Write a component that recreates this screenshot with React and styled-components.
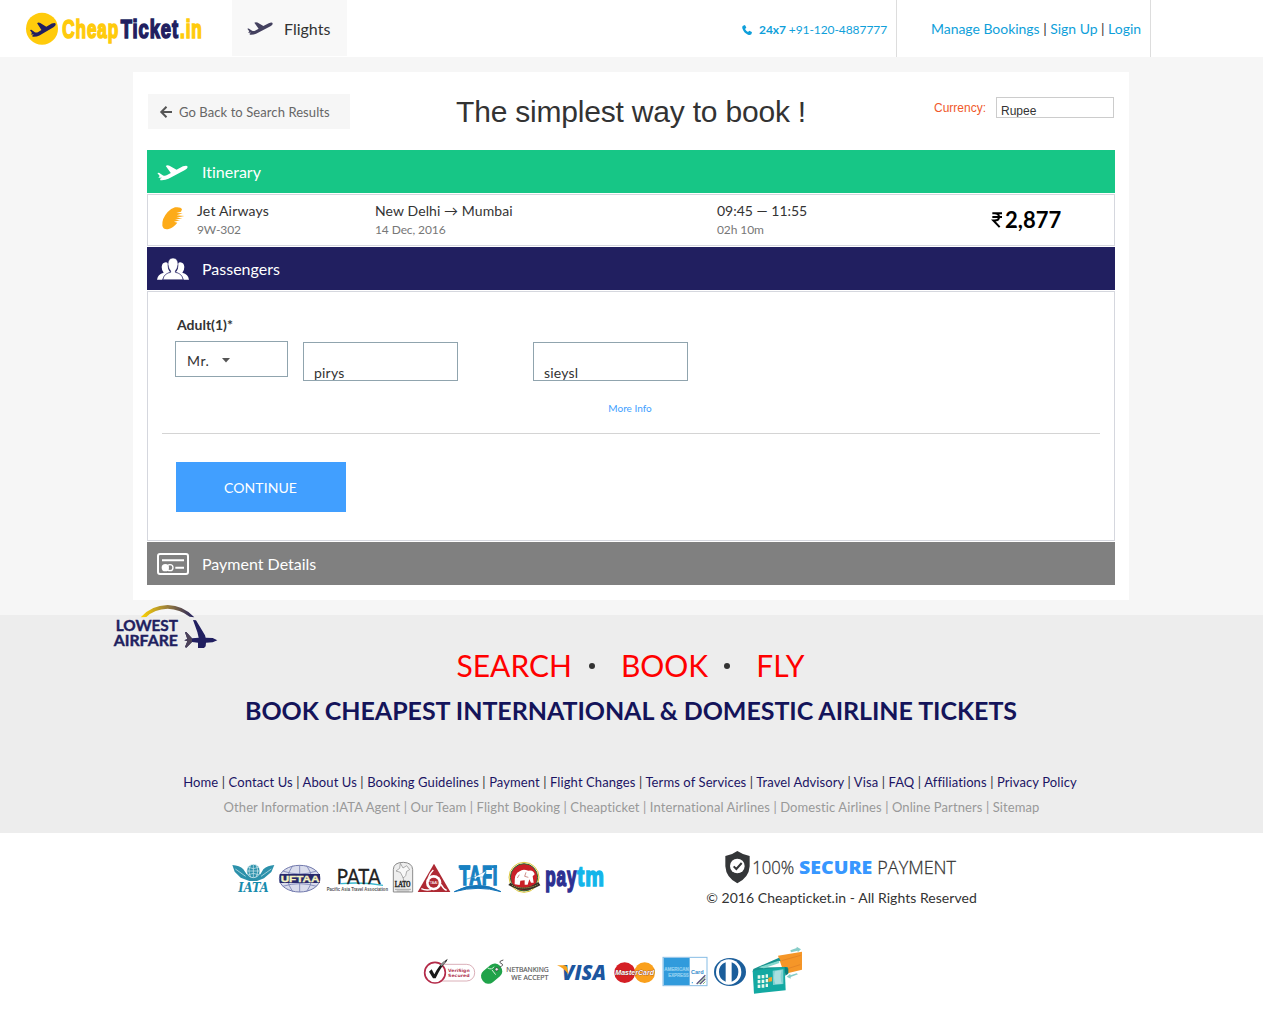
import React from "react";
import styled, { createGlobalStyle } from "styled-components";

const Global = createGlobalStyle`
  * { box-sizing: border-box; }
  body { margin: 0; background: #fff; color: #333; font-family: Lato, "Liberation Sans", sans-serif; font-size: 14px; font-variant-ligatures: none; }
  a { color: inherit; text-decoration: none; }
  svg { display: block; flex: none; overflow: visible; }
`;

const Page = styled.div`width: 1263px; height: 1019px; overflow: hidden;`;

const Header = styled.header`
  display: flex; height: 57px; background: #fff; padding-left: 25px;
`;
const Brand = styled.a`width: 207px; padding-top: 11px;`;
const Tab = styled.a`
  display: flex; align-items: center; gap: 11px; width: 115px; height: 56px;
  padding-left: 15px; background: #f8f8f8; font-size: 16px; color: #333;
`;
const Phone = styled.div`
  display: flex; align-items: center; width: 155px; height: 57px; margin-left: auto; padding-top: 2px;
  border-right: 1px solid #ddd; color: #0f9fda; font-size: 12px; white-space: pre; letter-spacing: -0.08px;
  svg { margin-right: 7px; }
`;
const Account = styled.nav`
  display: flex; align-items: center; justify-content: flex-end; width: 254px; height: 57px;
  margin-right: 112px; padding: 0 9px 1px 0; border-right: 1px solid #ddd; white-space: pre; letter-spacing: -0.03px;
  a { color: #0f9fda; }
`;

const Main = styled.main`height: 558px; padding: 15px 0 0 133px; background: #f6f6f6;`;
const Card = styled.section`width: 996px; height: 528px; padding: 0 14px; background: #fff;`;
const CardTop = styled.div`
  display: grid; grid-template-columns: 1fr auto 1fr; height: 78px; padding: 22px 1px 0;
`;
const Back = styled.a`
  display: flex; align-items: center; gap: 7px; width: 202px; height: 35px; padding: 0 0 0 12px;
  background: #f6f6f6; color: #666; font-size: 13px; letter-spacing: 0.08px;
  svg { margin-top: 1px; }
`;
const Title = styled.h1`
  margin: 0; font: 400 30px/36px "Liberation Sans", Arial, sans-serif; color: #333; white-space: nowrap;
  letter-spacing: -0.2px;
`;
const Currency = styled.label`
  display: flex; justify-content: flex-end; gap: 10px; padding-top: 3px;
  font: 12px/21px "Liberation Sans", Arial, sans-serif; color: #f0592b;
  > span:first-child { padding-top: 1px; }
`;
const CurrencyBox = styled.span`
  width: 118px; height: 21px; padding: 4px 4px 0; overflow: hidden; border: 1px solid #ccc;
  color: #333; line-height: 19px;
`;

const Bar = styled.h2`
  display: flex; align-items: center; height: 43px; margin: 0; padding-left: 10px;
  background: ${(p) => p.$bg}; color: #fff; font-size: 16px; font-weight: 400;
  span { width: 45px; padding-top: ${(p) => p.$drop || 0}px; }
`;
const FlightRow = styled.div`
  display: grid; grid-template-columns: 49px 178px 342px 275px 1fr; height: 52px; margin: 1px 0;
  border: 1px solid #d5d7de; background: #fff;
`;
const Carrier = styled.div`padding: 12px 0 0 14px;`;
const Cell = styled.div`
  padding-top: 6px; line-height: 19px; white-space: nowrap; letter-spacing: ${(p) => p.$ls || 0}px;
  small { display: block; font-size: 12px; color: #777; letter-spacing: -0.1px; }
`;
const Fare = styled.div`
  display: flex; align-items: center; gap: 3px; padding-bottom: 1px; color: #000; font-size: 22px; font-weight: 700;
`;

const Panel = styled.div`
  height: 250px; margin: 1px 0; padding: 22px 14px 0; border: 1px solid #d5d7de;
`;
const Legend = styled.div`padding-left: 15px; font-weight: 700; line-height: 21px; height: 27px;`;
const Fields = styled.div`display: flex; align-items: flex-start; height: 58px; padding-left: 13px;`;
const TitleSelect = styled.div`
  display: flex; align-items: center; gap: 13px; width: 113px; height: 36px; padding: 3px 0 0 11px;
  border: 1px solid #90a4ae; letter-spacing: 0.5px;
`;
const Input = styled.div`
  width: 155px; height: 39px; margin: 1px 0 0 ${(p) => p.$gap}px; padding: 20px 10px 0; overflow: hidden;
  border: 1px solid #90a4ae; line-height: 19px; letter-spacing: 0.2px;
`;
const More = styled.a`
  display: block; height: 34px; padding: 1px 2px 0 0; text-align: center; font-size: 10px; line-height: 17px; color: #419fff;
`;
const Submit = styled.button`
  display: block; width: 170px; height: 50px; margin: 28px 0 0 14px; padding: 1px 1px 0 0; border: 0;
  background: #419fff; color: #fff; font: 14px Lato, sans-serif; letter-spacing: 0.08px;
`;
const Divider = styled.div`height: 1px; background: #d4d4d4;`;

const Promo = styled.section`
  position: relative; height: 218px; padding-top: 29px; background: #ededed; text-align: center;
`;
const AirfareBadge = styled.div`position: absolute; left: 112px; top: -12px;`;
const Slogan = styled.div`
  display: flex; justify-content: center; align-items: center; height: 42px; padding-right: 2px; color: #f00; font-size: 30px;
  i { width: 6px; height: 6px; margin-top: 1px; border-radius: 50%; background: #333; }
  i:nth-of-type(1) { margin: 1px 26px 0 17px; }
  i:nth-of-type(2) { margin: 1px 26px 0 16px; }
`;
const Headline = styled.h2`
  margin: 0; height: 83px; padding-right: 1px; color: #14145a; font-size: 25px; line-height: 48px; font-weight: 700; white-space: nowrap;
  letter-spacing: -0.05px;
`;
const Links = styled.nav`
  height: 25px; padding-right: ${(p) => p.$shift || 0}px; line-height: 26px; font-size: 13px; letter-spacing: 0.1px;
  color: ${(p) => p.$sep}; white-space: nowrap;
  a { color: ${(p) => p.$color}; }
`;

const Bottom = styled.footer`padding-top: 17px;`;
const Credits = styled.div`display: flex; height: 95px; padding-left: 232px;`;
const Strip = styled.div`display: flex; padding-top: ${(p) => p.$top}px; padding-left: ${(p) => p.$left}px;`;
const Secure = styled.div`
  display: flex; flex-direction: column; align-items: center; width: 271px; margin-left: 99px;
  p { margin: 2px 0 0; line-height: 19px; white-space: nowrap; letter-spacing: 0.04px; }
`;

const T = ({ w, children, ...rest }) => (
  <text textLength={w} lengthAdjust="spacingAndGlyphs" {...rest}>{children}</text>
);
/* Heavy condensed lettering: a bold face narrowed by the factor sx. */
const Condensed = ({ x, y, sx, size, color, children }) => (
  <text transform={`translate(${x} ${y}) scale(${sx} 1)`} fontFamily="'Liberation Sans', sans-serif" fontWeight="700"
    fontSize={size} letterSpacing="4" fill={color} stroke={color} strokeWidth="5">{children}</text>
);

const PlanePath = () => (
  <path d="M26 3Q30-1 37 2L58 14 77 4Q90-1 91 6Q91 11 83 15L34 41Q24 46 10 45L9 41 15 38 4 38 8 33 1 24 6 23 18 31Q24 33 30 30L41 24Z" />
);
const Plane = ({ width, color }) => (
  <svg width={width} height={width / 2} viewBox="0 0 92 46" fill={color}><PlanePath /></svg>
);

const Logo = () => (
  <svg width="180" height="36" viewBox="75 33 540 108">
    <circle cx="126" cy="86" r="48" fill="#ffcb0c" />
    <g fill="#211f60" transform="translate(89 67) scale(.86 .96)"><PlanePath /></g>
    <Condensed x={187} y={115} sx={0.66} size={78} color="#ffcb0c">Cheap</Condensed>
    <Condensed x={362} y={115} sx={0.705} size={78} color="#211f60">Ticket</Condensed>
    <Condensed x={540} y={115} sx={0.66} size={78} color="#ffcb0c">.in</Condensed>
  </svg>
);
const PhoneIcon = () => (
  <svg width="10" height="10" viewBox="0 0 30 30" fill="#0f9fda">
    <path d="M2 3 8 0Q10 0 13 8L9 12Q12 18 18 21L22 17Q30 20 30 22L28 28Q24 31 18 29Q5 24 1 10Q0 5 2 3Z" />
  </svg>
);
const ArrowIcon = () => (
  <svg width="12" height="12" viewBox="0 0 12 12" fill="none" stroke="#555" strokeWidth="2"><path d="M6.5.8 1.3 6 6.5 11.2M1.3 6H12" /></svg>
);
const JetIcon = () => (
  <svg width="23" height="23" viewBox="0 0 69 69" fill="#fdab19">
    <path d="M39 1Q57-1 60 7L57 14 43 18 62 19 44 25 67 27 43 32 61 34 39 38 54 40 36 44 46 47Q33 63 20 66Q4 69 1 56Q-1 35 17 15Q27 4 39 1Z" />
  </svg>
);
const PeopleIcon = () => (
  <svg width="32" height="22" viewBox="0 0 96 66" fill="#fff">
    <path d="M0 65Q2 48 20 44Q14 37 14 27Q15 14 26 13Q31 13 33 17Q30 31 39 42Q20 48 16 65ZM96 65Q94 48 76 44Q82 37 82 27Q81 14 70 13Q65 13 63 17Q66 31 57 42Q76 48 80 65Z" />
    <path d="M48 0Q63 1 63 19Q62 32 55 39V43Q76 47 78 65H18Q20 47 41 43V39Q34 32 33 19Q33 1 48 0Z" stroke="#211f60" strokeWidth="1.5" />
  </svg>
);
const CardIcon = () => (
  <svg width="32" height="22" viewBox="0 0 96 66" fill="none" stroke="#fff" strokeWidth="6">
    <rect x="3" y="3" width="90" height="60" rx="6" />
    <path d="M15 22H81M55 44H81" />
    <circle cx="25" cy="44" r="11" fill="#fff" stroke="none" /><circle cx="39" cy="44" r="9" strokeWidth="4" />
  </svg>
);
const RupeeIcon = () => (
  <svg width="10" height="16" viewBox="0 0 30 47" fill="none" stroke="#000" strokeWidth="6">
    <path d="M1 3.5H30M1 14.5H30M1 3.5H8Q21 3.5 21 14.5 21 25 8 25H4L23 45" />
  </svg>
);
const Caret = () => <svg width="8" height="5" viewBox="0 0 8 5" fill="#555"><path d="M0 0H8L4 4.6Z" /></svg>;

const Airfare = () => (
  <svg width="106" height="46" viewBox="36 219 318 138">
    <defs><linearGradient id="arc"><stop offset="0" stopColor="#ffd500" /><stop offset=".5" stopColor="#9a7e3c" /><stop offset="1" stopColor="#211f60" /></linearGradient></defs>
    <path d="M122 262Q153 226 203 225 250 226 283 262L269 260Q240 237 203 236 163 237 139 261Z" fill="url(#arc)" />
    <g fontFamily="Lato, sans-serif" fontWeight="700" fontSize="46" fill="#211f60" stroke="#211f60" strokeWidth="1.2">
      <T x="47" y="304" w="187">LOWEST</T><T x="41" y="347" w="193">AIRFARE</T>
    </g>
    <path d="M279 270 288 271 315 316 317 323 338 324 352 331 338 337 318 338 317 349 312 354H294V338L276 336 259 353 255 351 262 334 253 331 262 327 255 307 259 306 276 325 296 323 292 306Z" fill="#211f60" />
    <path d="M255 307 259 306 276 325V336L259 353 255 351 262 334 253 331 262 327Z" fill="#4c4258" />
  </svg>
);

/* One mark of a logo strip; its drawing units are thirds of a pixel. */
const Mark = ({ x, y, w, h, children }) => (
  <svg width={w} height={h} viewBox={`${x} ${y} ${w * 3} ${h * 3}`}>{children}</svg>
);

const Associations = () => (
  <Strip $top={10}>
    <Mark x={21} y={15} w={45} h={35}>
      <path d="M22 30Q44 31 55 43L65 58H106L115 43Q128 31 148 30L139 51 117 70 96 78H73L47 68 29 50Z" fill="#2c91ab" />
      <circle cx="85" cy="48" r="20" fill="#2c91ab" stroke="#fff" strokeWidth="2" />
      <path d="M66 48H104M70 37Q85 45 100 37M70 59Q85 51 100 59M85 29V67M77 30Q67 48 77 66M93 30Q103 48 93 66M31 42 62 64M139 42 108 64" stroke="#d6edf1" strokeWidth="2" fill="none" />
      <T x="40" y="110" w="91" fontFamily="DejaVu Serif" fontWeight="700" fontStyle="italic" fontSize="36" fill="#168bad">IATA</T>
    </Mark>
    <Mark x={156} y={15} w={47} h={35}>
      <ellipse cx="224" cy="71" rx="61" ry="40" fill="#d9dcec" stroke="#7279ac" strokeWidth="3" />
      <path d="M173 48Q224 66 275 48M173 94Q224 78 275 94M164 63H284M164 81H284M224 31V111M203 32Q174 71 203 110M245 32Q274 71 245 110" fill="none" stroke="#7780b4" strokeWidth="2.5" />
      <path d="M164 57H285V84H164Z" fill="#28296c" />
      <T x="167" y="80" w="116" fontFamily="Liberation Sans" fontWeight="700" fontSize="27" fill="#f5f3c0" stroke="#f5f3c0">UFTAA</T>
    </Mark>
    <Mark x={297} y={15} w={67} h={35}>
      <path d="M348 86Q410 80 474 91" stroke="#39b8cf" strokeWidth="4" fill="none" />
      <T x="335" y="87" w="132" fontFamily="Lato" fontSize="66" fill="#222" stroke="#222">PATA</T>
      <T x="305" y="107" w="184" fontFamily="Liberation Sans" fontWeight="700" fontSize="14" fill="#555">Pacific Asia Travel Association</T>
    </Mark>
    <Mark x={498} y={15} w={24} h={35}>
      <path d="M505 111V43Q506 22 535 22 562 23 563 44V111Z" fill="#eee" stroke="#8b8b8b" strokeWidth="3" />
      <path d="M526 25 534 39 545 32 554 44 545 49 542 62 535 69 526 52 513 48 524 40ZM534 67 537 79" fill="#f8f8f8" stroke="#888" strokeWidth="2" />
      <T x="509" y="96" w="48" fontFamily="Liberation Serif" fontWeight="700" fontSize="24" fill="#222" stroke="#222">LATO</T>
      <path d="M510 103H558M515 108H553" stroke="#888" strokeWidth="2" />
    </Mark>
    <Mark x={0} y={15} w={38} h={35}>
      <path d="M57 26 106 111H8Z" fill="#ae2933" />
      <circle cx="56" cy="83" r="23" fill="#fff" /><circle cx="56" cy="83" r="15" fill="#ae2933" />
      <path d="M55 45Q36 64 42 80M78 88Q85 102 95 106M48 104Q30 107 19 101" stroke="#fff" strokeWidth="4" fill="none" />
      <T x="44" y="88" w="24" fontFamily="Liberation Sans" fontSize="11" fill="#fff">TAAI</T>
    </Mark>
    <Mark x={114} y={15} w={52} h={35}>
      <path d="M118 110Q188 72 258 110 190 90 118 110Z" fill="#1675b8" stroke="#1675b8" strokeWidth="3" />
      <Condensed x={134} y={91} sx={0.6} size={82} color="#1781c2">TAFI</Condensed>
      <path d="M131 31H166V40H131ZM230 31H246V39H230Z" fill="#1781c2" />
      <path d="M155 72Q185 66 213 48L203 66 187 66 180 74 178 67Z" fill="#fff" stroke="#1781c2" />
    </Mark>
    <Mark x={270} y={15} w={38} h={35}>
      <circle cx="327" cy="67" r="41" fill="#c92027" stroke="#286b35" strokeWidth="3" />
      <circle cx="327" cy="67" r="45" fill="none" stroke="#ddc63b" strokeWidth="3" />
      <path d="M299 88Q297 55 314 49 323 40 340 47 355 43 359 58L353 64 356 83H348L343 73 338 89H329V76L316 77 314 90Z" fill="#fff" />
      <path d="M333 52 329 64 340 67M313 59 307 69" stroke="#b45a51" strokeWidth="2" fill="none" />
      <path d="M286 83Q324 113 370 81L376 91Q329 119 280 90Z" fill="#332f27" />
      <path d="M291 91Q326 108 368 89" stroke="#d9bf58" strokeWidth="3" strokeDasharray="3 3" fill="none" />
    </Mark>
    <Mark x={384} y={15} w={64} h={35}>
      <Condensed x={391} y={94} sx={0.61} size={84} color="#2e3092">pay</Condensed>
      <Condensed x={487} y={94} sx={0.75} size={84} color="#13b5ea">tm</Condensed>
    </Mark>
  </Strip>
);

const SecureMark = () => (
  <svg width="240" height="36" viewBox="66 30 720 108">
    <path d="M112 33Q130 45 149 48V79Q147 113 112 130 78 113 76 79V48Q96 45 112 33Z" fill="#343638" />
    <circle cx="112" cy="78" r="22" fill="#fff" /><path d="M101 79 109 87 125 69" stroke="#343638" strokeWidth="6" fill="none" />
    <g fontFamily="'Open Sans', sans-serif" fontSize="54" fill="#333">
      <T x="157" y="101" w="126" fontWeight="300" stroke="#333" strokeWidth=".8">100%</T>
      <T x="297" y="101" w="220" fontWeight="800" fill="#3797ff">SECURE</T>
      <T x="532" y="101" w="236" fontWeight="300" stroke="#333" strokeWidth=".8">PAYMENT</T>
    </g>
  </svg>
);

const Payments = () => (
  <Strip $top={0} $left={421}>
    <Mark x={18} y={15} w={57} h={52}>
      <rect x="49" y="73" width="130" height="50" rx="24" fill="#fff" stroke="#c98896" strokeWidth="2" />
      <circle cx="60" cy="98" r="31" fill="#fff" stroke="#b42b49" strokeWidth="5" />
      <path d="M42 95 50 88 58 103Q72 73 98 56L95 64Q77 82 62 115H54Z" fill="#191919" />
      <path d="M77 76 91 65" stroke="#888" strokeWidth="7" />
      <g fontFamily="DejaVu Sans" fontWeight="700" fontSize="13" fill="#b23b55"><T x="99" y="95" w="65">VeriSign</T><T x="99" y="110" w="65">Secured</T></g>
    </Mark>
    <Mark x={189} y={15} w={74} h={52}>
      <rect x="-34" y="-22" width="68" height="44" rx="20" transform="translate(230 101) rotate(-40)" fill="#20a34a" />
      <path d="M218 84Q231 91 237 80M231 90 242 104" stroke="#d4eed8" strokeWidth="3" fill="none" />
      <circle cx="245" cy="88" r="5" fill="#eee" stroke="#333" strokeWidth="2" />
      <path d="M253 82Q270 75 258 70 248 65 265 60" stroke="#555" strokeWidth="3" fill="none" />
      <g fontFamily="Open Sans" fontSize="22" fill="#555" stroke="#555" strokeWidth=".5"><T x="274" y="95" w="127">NETBANKING</T><T x="289" y="120" w="111">WE ACCEPT</T></g>
    </Mark>
    <Mark x={411} y={15} w={58} h={52}>
      <T x="441" y="120" w="132" fontFamily="Open Sans" fontWeight="800" fontStyle="italic" fontSize="62" fill="#1c569f">VISA</T>
      <path d="M426 76H448Q456 77 457 84L460 103Q446 83 426 76Z" fill="#f6a21c" />
    </Mark>
    <Mark x={15} y={15} w={49} h={52}>
      <circle cx="59" cy="98" r="31" fill="#d51f25" /><circle cx="119" cy="98" r="31" fill="#faa01c" />
      <path d="M79 75Q89 82 89 98T79 121Z" fill="#d51f25" />
      <T x="31" y="106" w="116" fontFamily="Liberation Sans" fontWeight="700" fontStyle="italic" fontSize="24" fill="#fff" stroke="#7c2c26" strokeWidth="2" paintOrder="stroke">MasterCard</T>
    </Mark>
    <Mark x={162} y={15} w={51} h={52}>
      <rect x="174" y="52" width="132" height="85" fill="#fff" stroke="#86bde5" strokeWidth="3" />
      <path d="M176 54H254V135H176Z" fill="#319bdc" />
      <g fontFamily="Liberation Sans" fontWeight="700" fontSize="17" fill="#7cc3ec" stroke="#b9e0f6" strokeWidth=".6"><T x="178" y="93" w="73">AMERICAN</T><T x="190" y="111" w="61">EXPRESS</T></g>
      <T x="258" y="102" w="38" fontFamily="Liberation Sans" fontWeight="700" fontSize="18" fill="#338bcb">Card</T>
      <path d="M275 132 301 106M285 132 301 116" stroke="#5a527f" strokeWidth="4" /><path d="M281 132 301 111M294 132 301 125" stroke="#8bb87d" strokeWidth="3" />
      <circle cx="262" cy="128" r="2" fill="#319bdc" />
    </Mark>
    <Mark x={315} y={15} w={40} h={52}>
      <ellipse cx="375" cy="96" rx="48" ry="42" fill="#1b5e9b" /><circle cx="371" cy="96" r="38" fill="#fff" />
      <path d="M362 67V125A31 31 0 0 1 362 67ZM380 67V125A31 31 0 0 0 380 67Z" fill="#1b5e9b" />
    </Mark>
    <Mark x={435} y={15} w={55} h={52}>
      <path d="M519 47 591 35V89L538 102Z" fill="#f59628" /><path d="M530 62 587 46M541 88 586 74" stroke="#dc7d24" strokeWidth="2" />
      <path d="M445 87 522 53 527 62 465 83 548 81V99L443 95Z" fill="#18938f" />
      <path d="M461 82 521 62 523 69 477 85Z" fill="#83d8cd" />
      <path d="M443 92 539 81 542 151 447 161Z" fill="#13a9a2" /><path d="M539 80 550 86V101L541 107Z" fill="#0a7f7e" />
      <path d="M503 92 535 88V132L504 135Z" fill="#7ed1d1" /><path d="M510 94Q504 113 511 132L531 131Q523 114 530 91Z" fill="#a9dfdf" />
      <path d="M490 113 501 111V124L490 126Z" fill="#f6a128" />
      <path d="M458 106h8v10h-8zM470 105h8v10h-8zM482 103h7v10h-7zM458 120h8v10h-8zM470 119h8v10h-8zM482 117h7v10h-7zM458 134h8v10h-8zM470 133h8v10h-8zM482 131h7v10h-7z" fill="#e7f9ed" />
      <path d="M556 31 575 24V20L588 28 578 37V32L558 37ZM579 103 557 111V116L545 110 556 101V106L575 100Z" fill="#86ccc8" />
    </Mark>
  </Strip>
);

const primary = ["Home", "Contact Us", "About Us", "Booking Guidelines", "Payment", "Flight Changes", "Terms of Services", "Travel Advisory", "Visa", "FAQ", "Affiliations", "Privacy Policy"];
const secondary = ["IATA Agent", "Our Team", "Flight Booking", "Cheapticket", "International Airlines", "Domestic Airlines", "Online Partners", "Sitemap"];
const joinLinks = (items) => items.map((t, i) => <React.Fragment key={t}>{i > 0 && " | "}<a href="#">{t}</a></React.Fragment>);

export default function App() {
  return (
    <Page>
      <Global />
      <Header>
        <Brand href="#"><Logo /></Brand>
        <Tab href="#"><Plane width={26} color="#44415f" />Flights</Tab>
        <Phone><PhoneIcon /><b>24x7</b> +91-120-4887777</Phone>
        <Account><a href="#">Manage Bookings</a> | <a href="#">Sign Up</a> | <a href="#">Login</a></Account>
      </Header>
      <Main>
        <Card>
          <CardTop>
            <Back href="#"><ArrowIcon />Go Back to Search Results</Back>
            <Title>The simplest way to book !</Title>
            <Currency><span>Currency:</span><CurrencyBox>Rupee</CurrencyBox></Currency>
          </CardTop>
          <Bar $bg="#17c686" $drop={2}><span><Plane width={31} color="#fff" /></span>Itinerary</Bar>
          <FlightRow>
            <Carrier><JetIcon /></Carrier>
            <Cell $ls={0.2}>Jet Airways<small>9W-302</small></Cell>
            <Cell $ls={0.1}>New Delhi → Mumbai<small>14 Dec, 2016</small></Cell>
            <Cell>09:45 — 11:55<small>02h 10m</small></Cell>
            <Fare><RupeeIcon />2,877</Fare>
          </FlightRow>
          <Bar $bg="#211f60"><span><PeopleIcon /></span>Passengers</Bar>
          <Panel>
            <Legend>Adult(1)*</Legend>
            <Fields>
              <TitleSelect>Mr. <Caret /></TitleSelect>
              <Input $gap={15}>pirys</Input>
              <Input $gap={75}>sieysl</Input>
            </Fields>
            <More href="#">More Info</More>
            <Divider />
            <Submit>CONTINUE</Submit>
          </Panel>
          <Bar $bg="#808080"><span><CardIcon /></span>Payment Details</Bar>
        </Card>
      </Main>
      <Promo>
        <AirfareBadge><Airfare /></AirfareBadge>
        <Slogan>SEARCH<i />BOOK<i />FLY</Slogan>
        <Headline>BOOK CHEAPEST INTERNATIONAL &amp; DOMESTIC AIRLINE TICKETS</Headline>
        <Links $color="#1b1464" $sep="#333" $shift={3}>{joinLinks(primary)}</Links>
        <Links $color="#999" $sep="#999">Other Information :{joinLinks(secondary)}</Links>
      </Promo>
      <Bottom>
        <Credits>
          <Associations />
          <Secure>
            <SecureMark />
            <p>© 2016 Cheapticket.in - All Rights Reserved</p>
          </Secure>
        </Credits>
        <Payments />
      </Bottom>
    </Page>
  );
}
